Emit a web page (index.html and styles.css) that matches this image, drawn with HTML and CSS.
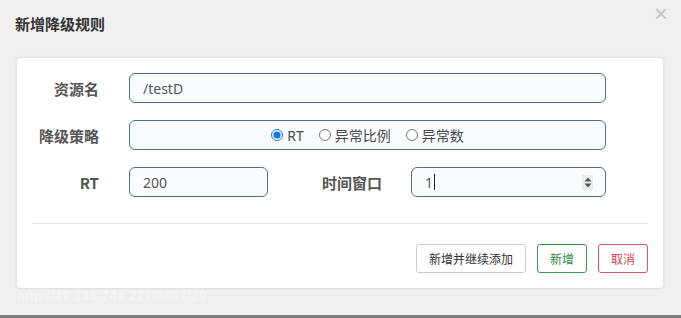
FILE: index.html
```html
<!DOCTYPE html>
<html lang="zh-CN">

<head>
    <meta charset="UTF-8">
    <meta name="viewport" content="width=device-width, initial-scale=1.0">
    <title>新增降级规则</title>
    <link rel="stylesheet" href="styles.css">
</head>

<body>
    <div class="dialog">
        <div class="dialog-header">
            <h3 class="dialog-title">新增降级规则</h3>
            <span class="close">&times;</span>
        </div>
        <div class="panel">
            <div class="form-row">
                <label class="label">资源名</label>
                <input class="field wide" type="text" value="/testD">
            </div>
            <div class="form-row">
                <label class="label">降级策略</label>
                <div class="field wide radios">
                    <label class="radio"><input type="radio" name="grade" checked> RT</label>
                    <label class="radio"><input type="radio" name="grade"> 异常比例</label>
                    <label class="radio"><input type="radio" name="grade"> 异常数</label>
                </div>
            </div>
            <div class="form-row">
                <label class="label">RT</label>
                <input class="field short" type="text" value="200">
                <label class="label second">时间窗口</label>
                <div class="field number">
                    <span class="value">1</span><span class="caret"></span>
                    <span class="spin">
                        <svg width="8" height="11" viewBox="0 0 8 11">
                            <path d="M4 0.5 L7.5 4.5 L0.5 4.5 Z" fill="#555"/>
                            <path d="M4 10.5 L7.5 6.5 L0.5 6.5 Z" fill="#555"/>
                        </svg>
                    </span>
                </div>
            </div>
            <hr class="divider">
            <div class="actions">
                <button class="btn">新增并继续添加</button>
                <button class="btn btn-ok">新增</button>
                <button class="btn btn-cancel">取消</button>
            </div>
        </div>
        <div class="ghost">http://49.235.244.227/0807/29</div>
    </div>
</body>

</html>
```

FILE: styles.css
```css
html, body {
    margin: 0;
    padding: 0;
}

body {
    width: 681px;
    height: 318px;
    overflow: hidden;
    background-color: #7d7d7d;
    font-family: "Noto Sans CJK SC", "Noto Sans", sans-serif;
}

.dialog {
    height: 315px;
    background-color: #f0f0f0;
    display: flex;
    flex-direction: column;
}

.dialog-header {
    height: 57px;
    display: flex;
    justify-content: space-between;
    align-items: flex-start;
    padding: 0 13px 0 15px;
    box-sizing: border-box;
}

.dialog-title {
    margin: 14px 0 0;
    font-size: 15px;
    line-height: 20px;
    font-weight: bold;
    color: #333;
}

.close {
    margin-top: 2px;
    font-family: "Liberation Sans", sans-serif;
    font-size: 24px;
    line-height: 24px;
    color: #c4c4c4;
}

.panel {
    margin: 0 17px 0 16px;
    height: 232px;
    box-sizing: border-box;
    padding-top: 15px;
    background-color: #fff;
    border: 1px solid #e2e2e2;
    border-radius: 4px;
    box-shadow: 0 0 2px rgba(0, 0, 0, 0.08);
}

.form-row {
    display: flex;
    align-items: center;
    height: 30px;
    margin-bottom: 17px;
}

.label {
    width: 82px;
    margin-right: 30px;
    text-align: right;
    font-size: 15px;
    font-weight: bold;
    color: #555;
}

.label.second {
    width: 114px;
    margin-right: 29px;
}

.field {
    height: 30px;
    box-sizing: border-box;
    border: 1px solid #4d7193;
    border-radius: 6px;
    background-color: #f8fcff;
    padding: 0 13px;
    font-family: "Noto Sans", "Noto Sans CJK SC", sans-serif;
    font-size: 14px;
    color: #555;
    outline: none;
}

.wide {
    width: 477px;
}

.short {
    width: 139px;
}

.radios {
    display: flex;
    justify-content: center;
    align-items: center;
    gap: 15px;
}

.radio {
    display: flex;
    align-items: center;
    font-size: 14px;
    color: #4a4a4a;
}

.radio input {
    margin: 0 4px 0 0;
    width: 12px;
    height: 12px;
    accent-color: #1a73e8;
}

.number {
    width: 195px;
    display: flex;
    align-items: center;
    padding-right: 12px;
}

.caret {
    width: 1px;
    height: 16px;
    margin-left: 1px;
    background-color: #222;
}

.spin {
    margin-left: auto;
    width: 11px;
    height: 15px;
    background-color: #ececec;
    display: flex;
    align-items: center;
    justify-content: center;
}

.divider {
    margin: 26px 15px 0;
    border: 0;
    border-top: 1px solid #e5e5e5;
}

.actions {
    display: flex;
    justify-content: flex-end;
    gap: 11px;
    margin: 20px 15px 0 0;
}

.btn {
    height: 29px;
    padding: 0 12px;
    background-color: #fff;
    border: 1px solid #ccc;
    border-radius: 3px;
    font-family: "Noto Sans CJK SC", sans-serif;
    font-size: 12px;
    color: #333;
}

.btn-ok {
    border-color: #3c9a4c;
    color: #2e8b3e;
}

.btn-cancel {
    border-color: #d05a65;
    color: #d0404f;
}

.ghost {
    padding: 0 0 0 18px;
    font-family: "Liberation Sans", sans-serif;
    font-size: 12px;
    color: #f7f7f7;
    letter-spacing: 1px;
}
```
